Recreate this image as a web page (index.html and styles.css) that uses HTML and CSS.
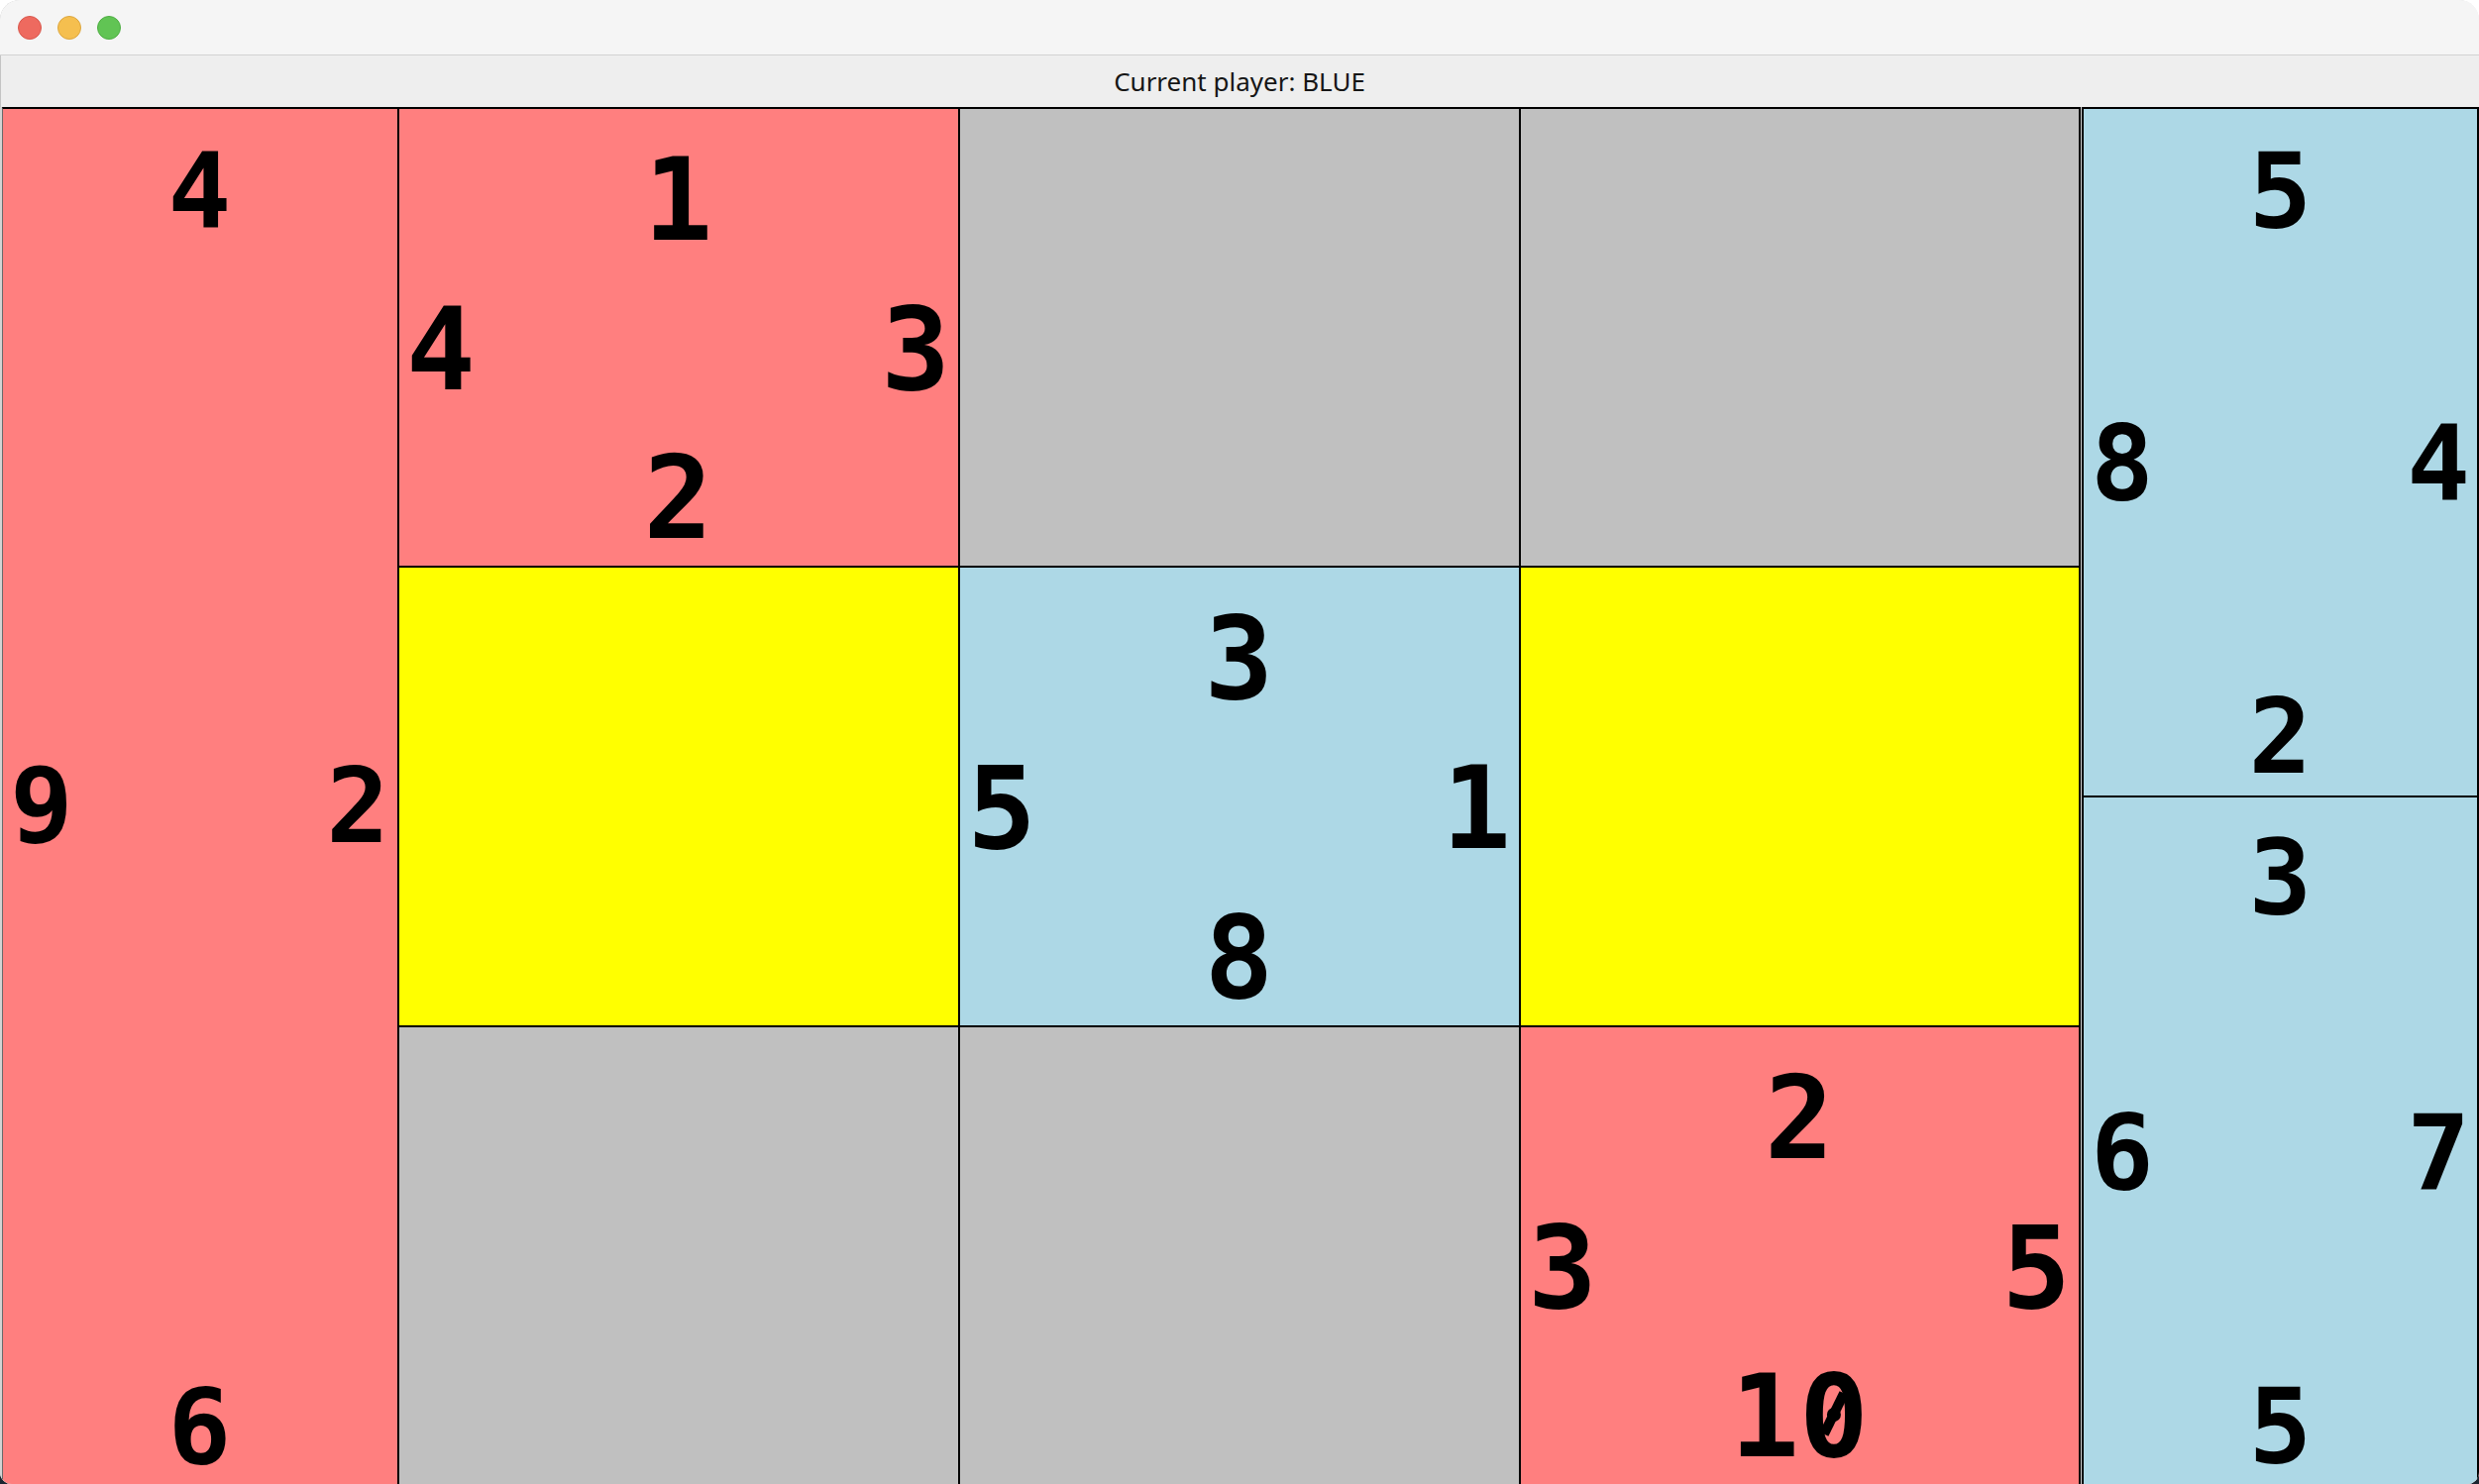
FILE: index.html
```html
<!DOCTYPE html>
<html lang="en">
<head>
<meta charset="utf-8">
<title>Current player: BLUE</title>
<link rel="stylesheet" href="styles.css">
</head>
<body>
<div class="window">
  <div class="titlebar">
    <span class="light light-close"></span>
    <span class="light light-min"></span>
    <span class="light light-max"></span>
  </div>
  <div class="status">Current player: BLUE</div>
  <div class="board">
    <div class="tile tile-side tile-left red">
      <span class="n n-t">4</span><span class="n n-l">9</span><span class="n n-r">2</span><span class="n n-b">6</span>
    </div>
    <div class="grid">
      <div class="cell tile tile-mid red">
        <span class="n n-t">1</span><span class="n n-l">4</span><span class="n n-r">3</span><span class="n n-b">2</span>
      </div>
      <div class="cell gray"></div>
      <div class="cell gray"></div>
      <div class="cell yellow"></div>
      <div class="cell tile tile-mid blue">
        <span class="n n-t">3</span><span class="n n-l">5</span><span class="n n-r">1</span><span class="n n-b">8</span>
      </div>
      <div class="cell yellow"></div>
      <div class="cell gray"></div>
      <div class="cell gray"></div>
      <div class="cell tile tile-mid red">
        <span class="n n-t">2</span><span class="n n-l">3</span><span class="n n-r">5</span><span class="n n-b">1<span class="zero">0</span></span>
      </div>
    </div>
    <div class="side">
      <div class="tile tile-side side-top blue">
        <span class="n n-t">5</span><span class="n n-l">8</span><span class="n n-r">4</span><span class="n n-b">2</span>
      </div>
      <div class="tile tile-side side-bottom blue">
        <span class="n n-t">3</span><span class="n n-l">6</span><span class="n n-r">7</span><span class="n n-b">5</span>
      </div>
    </div>
  </div>
</div>
</body>
</html>
```

FILE: styles.css
```css
html, body {
  margin: 0;
  padding: 0;
}

body {
  width: 2502px;
  height: 1498px;
  overflow: hidden;
  background: linear-gradient(to bottom, #ffffff 0, #ffffff 50%, #1b2530 50%, #1b2530 100%);
}

.window {
  width: 2502px;
  height: 1498px;
  border-radius: 20px 20px 12px 12px;
  overflow: hidden;
  background: #eeeeee;
  display: flex;
  flex-direction: column;
  box-shadow: inset 1px 0 0 #c4c4c4;
}

.titlebar {
  flex: none;
  height: 55px;
  border-bottom: 1px solid #d2d2d2;
  background: #f5f5f5;
  display: flex;
  align-items: center;
  gap: 16px;
  padding-left: 18px;
}

.light {
  width: 22px;
  height: 22px;
  border-radius: 50%;
  border: 1px solid transparent;
}

.light-close {
  background: #ee6a5f;
  border-color: #d8594e;
}

.light-min {
  background: #f5bf4f;
  border-color: #dca63f;
}

.light-max {
  background: #61c454;
  border-color: #4fae44;
}

.status {
  flex: none;
  height: 52px;
  display: flex;
  align-items: center;
  justify-content: center;
  font-family: "Noto Sans", "Open Sans", sans-serif;
  font-size: 26px;
  color: #161616;
}

.board {
  flex: none;
  height: 1392px;
  display: flex;
  padding-left: 2px;
  background: #d4d4d4;
}

.red { background: #ff7f7f; }
.blue { background: #add8e6; }
.yellow { background: #ffff00; }
.gray { background: #c0c0c0; }

.tile {
  display: grid;
  grid-template-columns: auto 1fr auto;
  grid-template-rows: auto 1fr auto;
  grid-template-areas:
    "t t t"
    "l . r"
    "b b b";
  font-family: "DejaVu Sans Mono", "Liberation Mono", monospace;
  font-weight: bold;
  line-height: 1;
  color: #000;
  box-sizing: border-box;
}

.n-t { grid-area: t; justify-self: center; }
.n-b { grid-area: b; justify-self: center; }
.n-l { grid-area: l; align-self: center; }
.n-r { grid-area: r; align-self: center; }

/* slashed zero, as in the reference's monospaced font */
.zero {
  position: relative;
}

.zero::after {
  content: "";
  position: absolute;
  left: calc(0.301em - 5px);
  top: calc(0.563em - 23px);
  width: 10px;
  height: 46px;
  background: #000;
  transform: rotate(26deg);
}

.tile-mid {
  font-size: 116px;
  padding: 34px 8px 10px 7px;
}

.tile-side {
  font-size: 106px;
  padding: 31px 8px 6px 7px;
}

.tile-left {
  flex: none;
  width: 401px;
  border-left: 1px solid #6a6a6a;
  border-right: 2px solid #000;
  border-top: 2px solid #000;
}

.tile-left .n-l,
.tile-left .n-r {
  margin-bottom: 7px;
}

.grid {
  flex: none;
  width: 1697px;
  box-sizing: border-box;
  display: grid;
  grid-template-columns: 566px 566px 565px;
  grid-template-rows: 463px 464px 463px;
  border-top: 2px solid #000;
}

.cell {
  border-right: 2px solid #000;
  border-bottom: 2px solid #000;
}

.side {
  flex: none;
  width: 401px;
  margin-left: 1px;
  box-sizing: border-box;
  display: flex;
  flex-direction: column;
  border: 2px solid #000;
  border-bottom: none;
}

.side-top {
  flex: none;
  height: 695px;
  border-bottom: 2px solid #000;
  padding-right: 7px;
}

.side-bottom {
  flex: 1;
  padding-top: 29px;
  padding-right: 7px;
}
```
